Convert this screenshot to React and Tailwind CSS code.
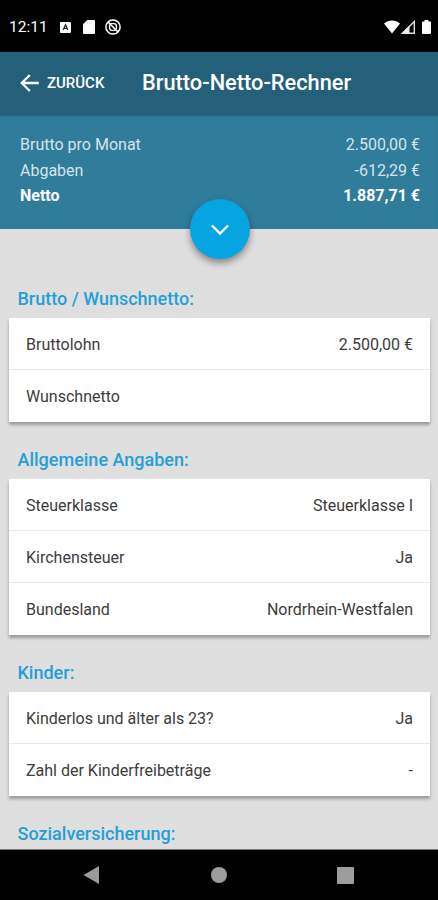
const sections = [
  {
    title: "Brutto / Wunschnetto:",
    rows: [
      { label: "Bruttolohn", value: "2.500,00 €" },
      { label: "Wunschnetto", value: "" },
    ],
  },
  {
    title: "Allgemeine Angaben:",
    rows: [
      { label: "Steuerklasse", value: "Steuerklasse I" },
      { label: "Kirchensteuer", value: "Ja" },
      { label: "Bundesland", value: "Nordrhein-Westfalen" },
    ],
  },
  {
    title: "Kinder:",
    rows: [
      { label: "Kinderlos und älter als 23?", value: "Ja" },
      { label: "Zahl der Kinderfreibeträge", value: "-" },
    ],
  },
  { title: "Sozialversicherung:", rows: [] },
];

function StatusBar() {
  return (
    <div className="flex h-[52px] shrink-0 items-center bg-black pl-[9px] pr-[7px] pt-[2px] text-white">
      <span className="w-[51px] pt-[2px] text-[15.5px]">12:11</span>
      <svg className="h-[11px] w-[11px]" viewBox="0 0 11 11">
        <rect width="11" height="11" rx="1" fill="#fff" />
        <path d="M3.2 8 5.5 2.8 7.8 8M4.2 6.4h2.6" fill="none" stroke="#222" strokeWidth="1.2" />
      </svg>
      <svg className="ml-3 h-[14px] w-[12px]" viewBox="0 0 12 14">
        <path d="M4.2 0H11a1 1 0 0 1 1 1v12a1 1 0 0 1-1 1H1a1 1 0 0 1-1-1V4.2Z" fill="#fff" />
        <path d="M4.4 2.2v2M6.6 2.2v2M8.8 2.2v2" stroke="#ddd" strokeWidth=".8" />
      </svg>
      <svg className="ml-[10px] h-4 w-4" viewBox="0 0 16 16" fill="none" stroke="#fff">
        <circle cx="8" cy="8" r="7.1" strokeWidth="1.5" />
        <path d="M5.2 4.6h3.6a2.6 2.6 0 0 1 2.6 2.6v3.4M10.4 11.4H7.2a2.6 2.6 0 0 1-2.6-2.6V5.4" strokeWidth="1.4" />
        <path d="M3 3 13 13" strokeWidth="1.6" />
      </svg>
      <svg className="ml-auto h-[14px] w-4" viewBox="0 0 16 14">
        <path d="M0 3.6C4.5-.6 11.5-.6 16 3.6L8 13.6Z" fill="#fff" />
      </svg>
      <svg className="ml-[1px] h-[14px] w-[14px]" viewBox="0 0 14 14">
        <path d="M13.3 1.5v11.8H1.5Z" fill="none" stroke="#ddd" strokeWidth="1.4" />
        <path d="M0 14 8.5 5.5V14Z" fill="#eee" />
      </svg>
      <svg className="ml-[7px] h-[14px] w-[9px]" viewBox="0 0 9 14">
        <path d="M2.5 0h4v1.4H8a1 1 0 0 1 1 1V13a1 1 0 0 1-1 1H1a1 1 0 0 1-1-1V2.4a1 1 0 0 1 1-1h1.5Z" fill="#fff" />
      </svg>
    </div>
  );
}

function AppBar() {
  return (
    <header className="flex h-[63px] shrink-0 items-center bg-[#24607a] pb-[2px] pl-5 text-white">
      <svg className="h-[18px] w-[19px]" viewBox="0 0 19 18" fill="none" stroke="#fff" strokeWidth="2.3">
        <path d="M18.8 9H1.8M9.8 1 1.8 9l8 8" />
      </svg>
      <button className="ml-2 w-[95px] pt-[2px] text-left text-[15px] font-medium">ZURÜCK</button>
      <h1 className="whitespace-nowrap pt-[2px] text-[21.8px] font-medium">Brutto-Netto-Rechner</h1>
    </header>
  );
}

function Summary() {
  return (
    <div className="relative h-[114px] shrink-0 bg-[#307c9b] pl-5 pr-[18px] pt-[17px] text-base leading-[25.5px] text-[#d5e4eb] shadow-[inset_0_2px_2px_-1px_#24607a]">
      <div className="flex justify-between">
        <span>Brutto pro Monat</span>
        <span>2.500,00 €</span>
      </div>
      <div className="flex justify-between">
        <span>Abgaben</span>
        <span>-612,29 €</span>
      </div>
      <div className="flex justify-between font-bold text-white">
        <span>Netto</span>
        <span>1.887,71 €</span>
      </div>
      <button className="absolute -bottom-[30px] left-[190px] flex h-[60px] w-[60px] items-center justify-center rounded-full bg-[#06a5e1] shadow-[0_4px_7px_rgba(0,0,0,0.4)]">
        <svg className="h-[11px] w-[18px]" viewBox="0 0 18 11" fill="none" stroke="#fff" strokeWidth="2.4">
          <path d="m1 1.5 8 8 8-8" />
        </svg>
      </button>
    </div>
  );
}

function Section({ title, rows }) {
  return (
    <section className="mb-[17px]">
      <h2 className="flex h-10 items-center pl-[8.5px] pt-[2px] text-lg font-medium text-[#259fd5]">{title}</h2>
      {rows.length > 0 && (
        <div className="divide-y divide-[#e8e8e8] bg-white shadow-[0_3px_3px_rgba(0,0,0,0.3)]">
          {rows.map((row) => (
            <div key={row.label} className="flex h-[52px] items-center justify-between px-[17px] pt-[2px] text-base text-[#3c3c3c]">
              <span>{row.label}</span>
              <span>{row.value}</span>
            </div>
          ))}
        </div>
      )}
    </section>
  );
}

function NavBar() {
  return (
    <nav className="flex h-[51px] shrink-0 items-center justify-between border-t border-[#777] bg-black pl-[83px] pr-[84px]">
      <svg className="h-[18px] w-[17px]" viewBox="0 0 17 18">
        <path d="M16 0v18L.5 9Z" fill="#9c9c9c" />
      </svg>
      <span className="h-4 w-4 rounded-full bg-[#9c9c9c]" />
      <span className="h-[17px] w-[17px] rounded-[1px] bg-[#9c9c9c]" />
    </nav>
  );
}

export default function App() {
  return (
    <div className="flex h-[900px] w-[438px] flex-col overflow-hidden bg-[#dfdfdf] font-['Roboto',sans-serif]">
      <StatusBar />
      <AppBar />
      <Summary />
      <main className="min-h-0 flex-1 overflow-hidden pl-[9px] pr-2 pt-[49px]">
        {sections.map((section) => (
          <Section key={section.title} title={section.title} rows={section.rows} />
        ))}
      </main>
      <NavBar />
    </div>
  );
}
